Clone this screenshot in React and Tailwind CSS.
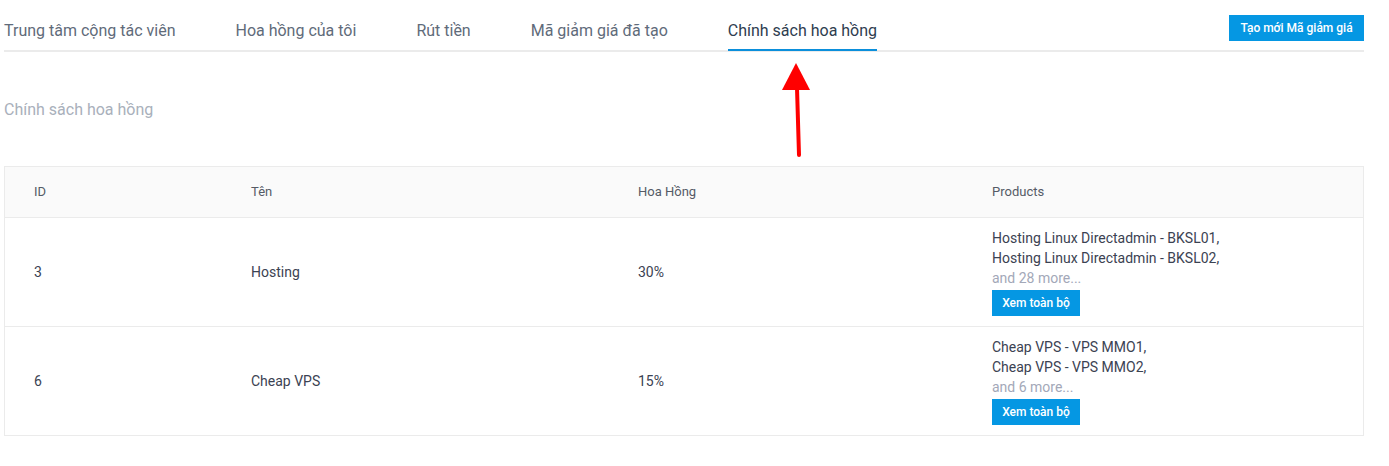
const tabs = [
  'Trung tâm cộng tác viên',
  'Hoa hồng của tôi',
  'Rút tiền',
  'Mã giảm giá đã tạo',
  'Chính sách hoa hồng',
]

const rows = [
  {
    id: 3,
    name: 'Hosting',
    rate: '30%',
    products: ['Hosting Linux Directadmin - BKSL01,', 'Hosting Linux Directadmin - BKSL02,'],
    more: 28,
  },
  {
    id: 6,
    name: 'Cheap VPS',
    rate: '15%',
    products: ['Cheap VPS - VPS MMO1,', 'Cheap VPS - VPS MMO2,'],
    more: 6,
  },
]

function App() {
  const active = 4

  return (
    <div className="relative min-h-screen bg-white font-['Roboto',sans-serif]">
      <div className="w-[1360px] ml-[4px]">
        {/* tabs */}
        <div className="flex justify-between items-start border-b-2 border-[#ebebeb] h-[52px]">
          <div className="flex gap-[60px]">
            {tabs.map((t, i) => (
              <div
                key={t}
                className={
                  'pt-[19px] pb-[6px] text-[16px] leading-6 border-b-2 -mb-[2px] ' +
                  (i === active ? 'text-[#2e3d4f] border-[#0b8fdb]' : 'text-[#5f6b7a] border-transparent')
                }
              >
                {t}
              </div>
            ))}
          </div>
          <button className="mt-[15px] h-[26px] w-[135px] bg-[#0597e3] text-white text-[12px] font-medium">
            Tạo mới Mã giảm giá
          </button>
        </div>

        <h2 className="mt-[46px] text-[16px] leading-6 text-[#a9b0bb]">Chính sách hoa hồng</h2>

        {/* table */}
        <div className="mt-[44px] border border-[#ebebeb]">
          <div className="flex h-[51px] items-center bg-[#fafafa] border-b border-[#ebebeb] text-[13px] text-[#555b66]">
            <div className="w-[217px] pl-[29px]">ID</div>
            <div className="w-[387px] pl-[29px]">Tên</div>
            <div className="w-[354px] pl-[29px]">Hoa Hồng</div>
            <div className="flex-1 pl-[29px]">Products</div>
          </div>
          {rows.map((r, i) => (
            <div
              key={r.id}
              className={
                'flex items-center text-[14px] text-[#3b4252] ' +
                (i < rows.length - 1 ? 'border-b border-[#ebebeb]' : '')
              }
            >
              <div className="w-[217px] pl-[29px]">{r.id}</div>
              <div className="w-[387px] pl-[29px]">{r.name}</div>
              <div className="w-[354px] pl-[29px]">{r.rate}</div>
              <div className="flex-1 pl-[29px] py-[10px] leading-5">
                {r.products.map((p) => (
                  <div key={p}>{p}</div>
                ))}
                <div className="text-[#a3a8b8]">and {r.more} more...</div>
                <button className="mt-[2px] h-[26px] w-[88px] bg-[#0597e3] text-white text-[12px] font-medium">
                  Xem toàn bộ
                </button>
              </div>
            </div>
          ))}
        </div>
      </div>

      {/* annotation arrow */}
      <svg className="absolute left-0 top-0 pointer-events-none" width="1389" height="466">
        <polygon points="796,63 782,90 810,90" fill="#ff0000" />
        <line x1="797" y1="88" x2="799" y2="155" stroke="#ff0000" strokeWidth="4" strokeLinecap="round" />
      </svg>
    </div>
  )
}
export default App
